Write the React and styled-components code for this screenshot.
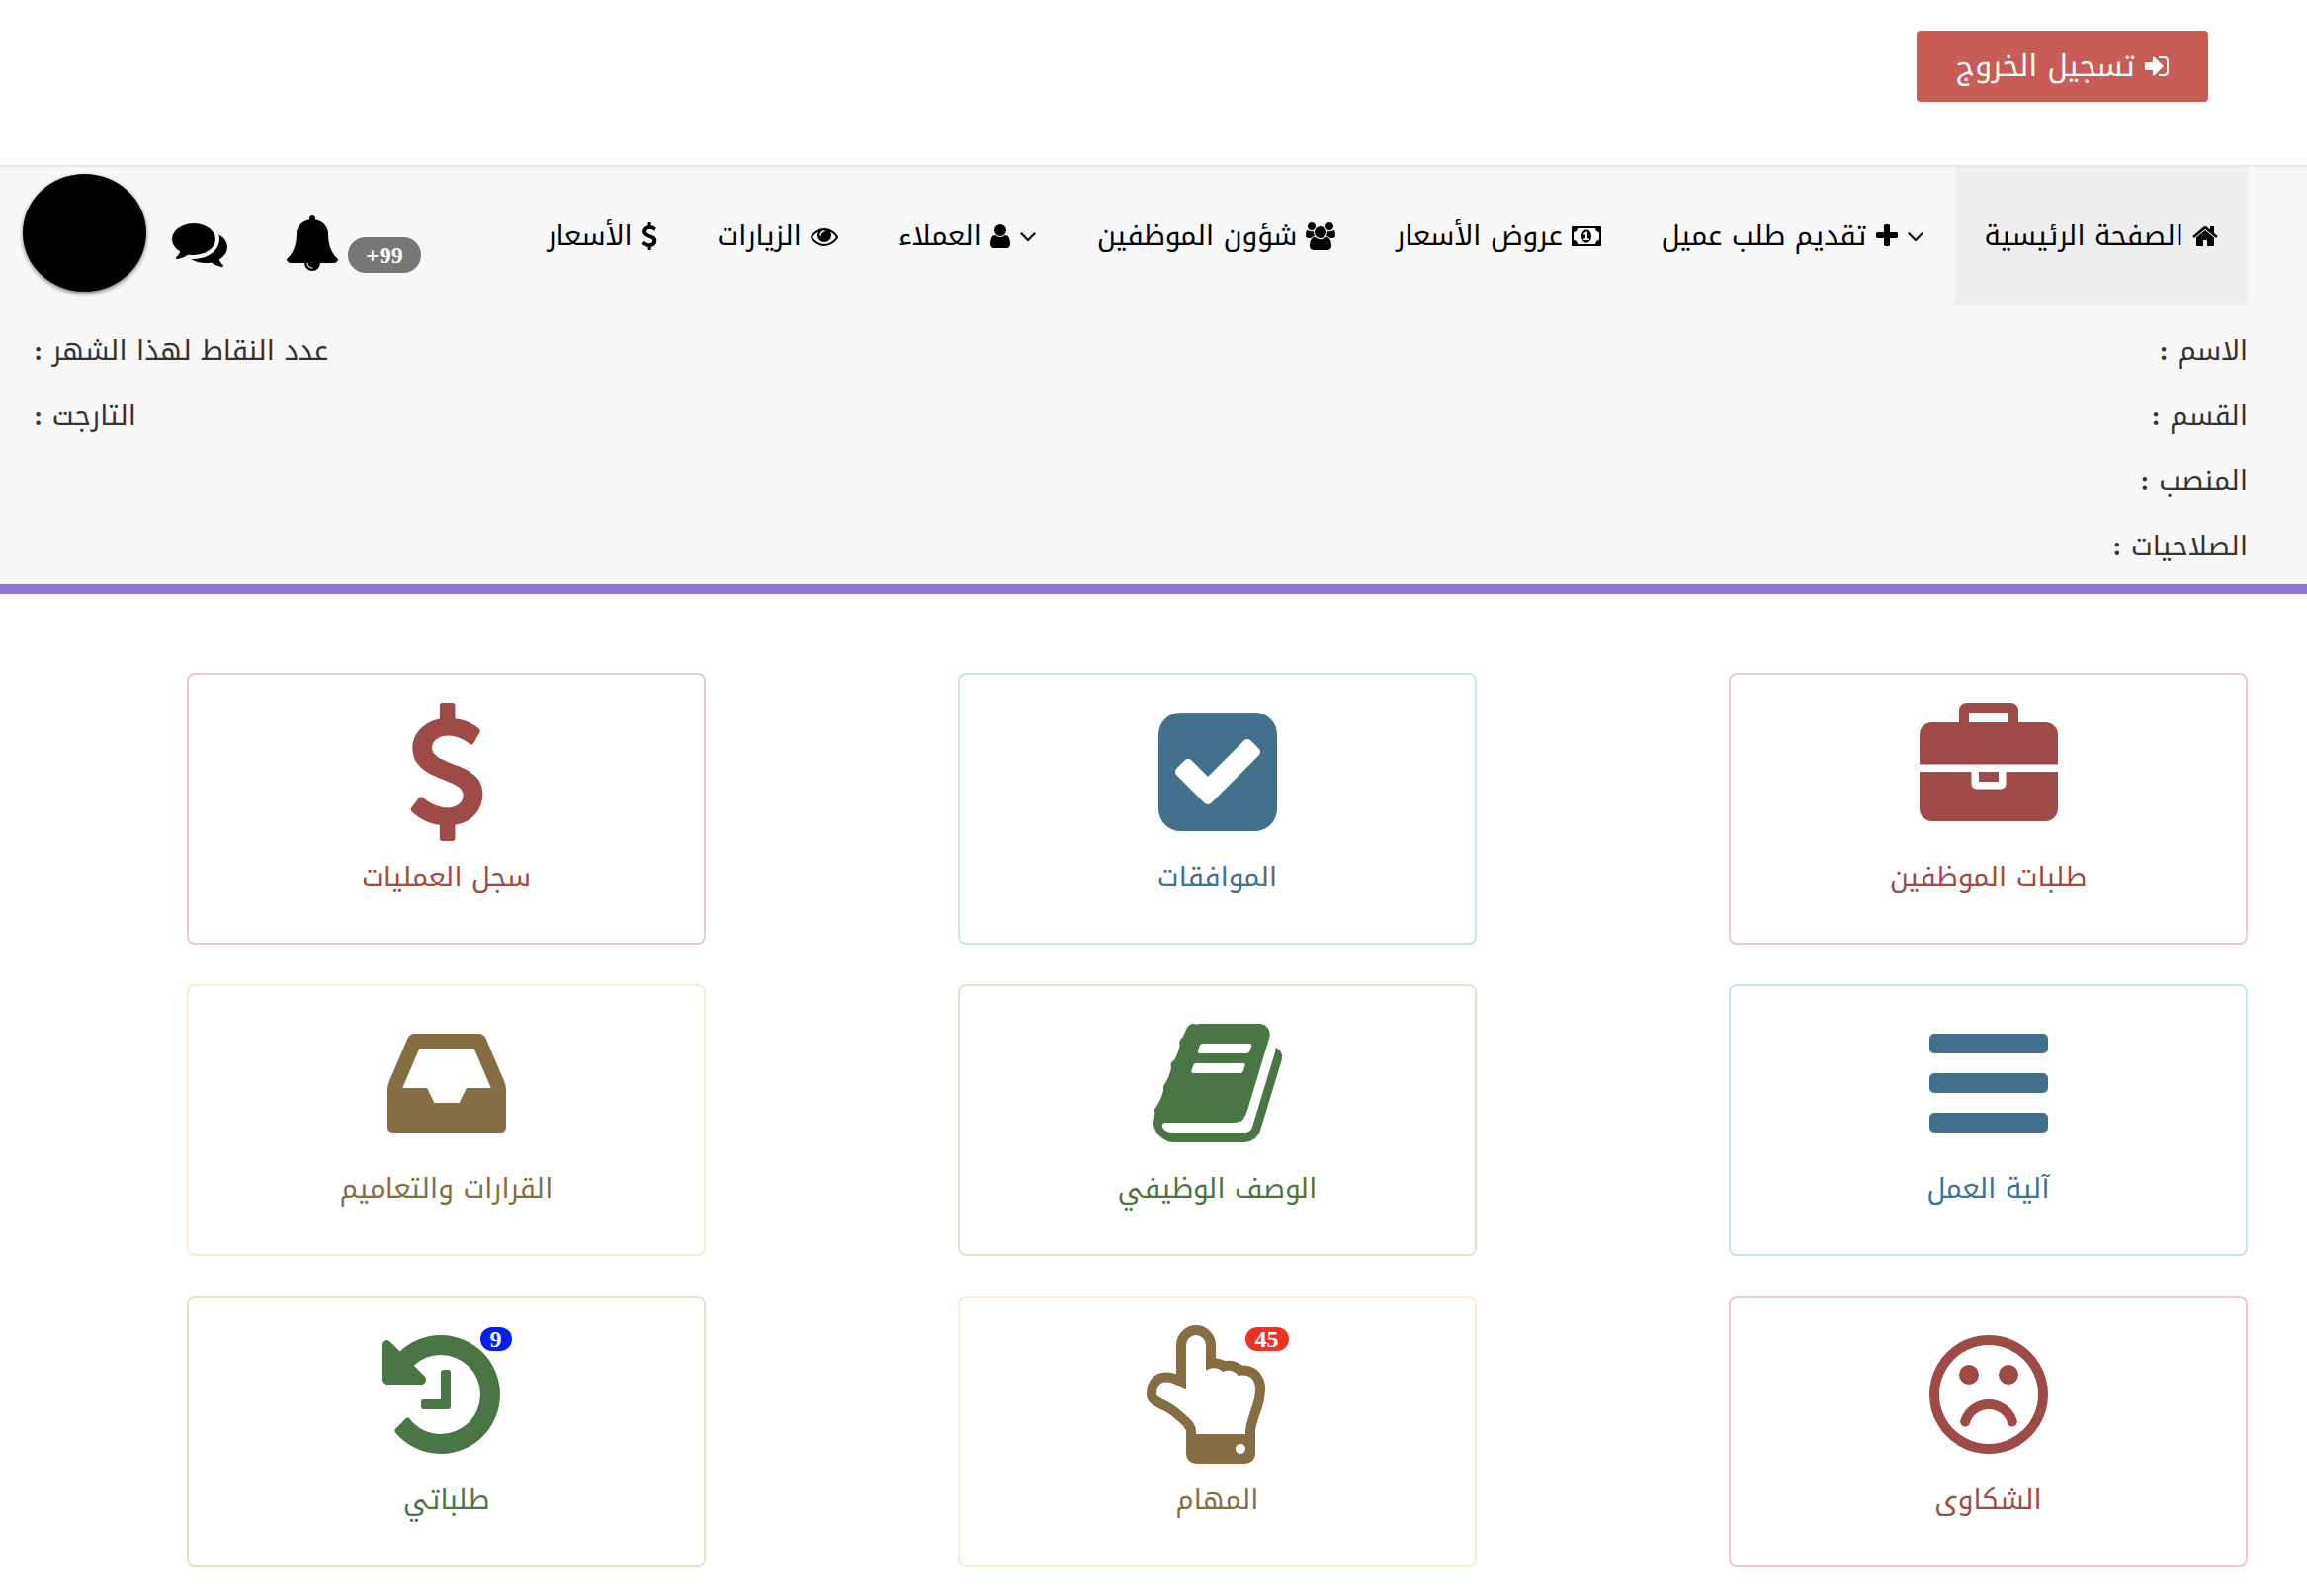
import React from "react";
import styled, { createGlobalStyle } from "styled-components";

const GlobalStyle = createGlobalStyle`
  * {
    box-sizing: border-box;
  }

  body {
    margin: 0;
    background: #fff;
    color: #333;
    font-family: "Noto Kufi Arabic", "Noto Sans Arabic", "DejaVu Sans", sans-serif;
    font-size: 28px;
    line-height: 40px;
  }
`

// x and w are the left edge and the advance width of the glyph in its 1792 unit box
const icons = {
  signIn: { x: 128, w: 1536, d: "M1312 896q0 26-19 45l-544 544q-19 19-45 19t-45-19-19-45v-288h-448q-26 0-45-19t-19-45v-384q0-26 19-45t45-19h448v-288q0-26 19-45t45-19 45 19l544 544q19 19 19 45zm352-352v704q0 119-84.5 203.5t-203.5 84.5h-320q-13 0-22.5-9.5t-9.5-22.5q0-4-1-20t-.5-26.5 3-23.5 10-19.5 20.5-6.5h320q66 0 113-47t47-113v-704q0-66-47-113t-113-47h-312l-11.5-1-11.5-3-8-5.5-7-9-2-13.5q0-4-1-20t-.5-26.5 3-23.5 10-19.5 20.5-6.5h320q119 0 203.5 84.5t84.5 203.5z" },
  home: { x: 64, w: 1664, d: "M1472 992v480q0 26-19 45t-45 19h-384v-384h-256v384h-384q-26 0-45-19t-19-45v-480q0-1 .5-3t.5-3l575-474 575 474q1 2 1 6zm223-69l-62 74q-8 9-21 11h-3q-13 0-21-7l-692-577-692 577q-12 8-24 7-13-2-21-11l-62-74q-8-10-7-23.5t11-21.5l719-599q32-26 76-26t76 26l244 204v-195q0-14 9-23t23-9h192q14 0 23 9t9 23v408l219 182q10 8 11 21.5t-7 23.5z" },
  angleDown: { x: 320, w: 1152, d: "M1395 736q0 13-10 23l-466 466q-10 10-23 10t-23-10l-466-466q-10-10-10-23t10-23l50-50q10-10 23-10t23 10l393 393 393-393q10-10 23-10t23 10l50 50q10 10 10 23z" },
  plus: { x: 192, w: 1408, d: "M1600 736v192q0 40-28 68t-68 28h-416v416q0 40-28 68t-68 28h-192q-40 0-68-28t-28-68v-416h-416q-40 0-68-28t-28-68v-192q0-40 28-68t68-28h416v-416q0-40 28-68t68-28h192q40 0 68 28t28 68v416h416q40 0 68 28t28 68z" },
  money: { x: 0, w: 1920, d: "M768 1152h384v-96h-128v-448h-114l-148 137 77 80q42-37 55-57h2v288h-128v96zm512-256q0 70-21 142t-59.5 134-101.5 101-138 39-138-39-101.5-101-59.5-134-21-142 21-142 59.5-134 101.5-101 138-39 138 39 101.5 101 59.5 134 21 142zm512 256v-512q-106 0-181-75t-75-181h-1152q0 106-75 181t-181 75v512q106 0 181 75t75 181h1152q0-106 75-181t181-75zm128-832v1152q0 26-19 45t-45 19h-1792q-26 0-45-19t-19-45v-1152q0-26 19-45t45-19h1792q26 0 45 19t19 45z" },
  users: { x: -64, w: 1920, d: "M529 896q-162 5-265 128h-134q-82 0-138-40.5t-56-118.5q0-353 124-353 6 0 43.5 21t97.5 42.5 119 21.5q67 0 133-23-5 37-5 66 0 139 81 256zm1071 637q0 120-73 189.5t-194 69.5h-874q-121 0-194-69.5t-73-189.5q0-53 3.5-103.5t14-109 26.5-108.5 43-97.5 62-81 85.5-53.5 111.5-20q10 0 43 21.5t73 48 107 48 135 21.5 135-21.5 107-48 73-48 43-21.5q61 0 111.5 20t85.5 53.5 62 81 43 97.5 26.5 108.5 14 109 3.5 103.5zm-1024-1277q0 106-75 181t-181 75-181-75-75-181 75-181 181-75 181 75 75 181zm704 384q0 159-112.5 271.5t-271.5 112.5-271.5-112.5-112.5-271.5 112.5-271.5 271.5-112.5 271.5 112.5 112.5 271.5zm576 225q0 78-56 118.5t-138 40.5h-134q-103-123-265-128 81-117 81-256 0-29-5-66 66 23 133 23 59 0 119-21.5t97.5-42.5 43.5-21q124 0 124 353zm-128-609q0 106-75 181t-181 75-181-75-75-181 75-181 181-75 181 75 75 181z" },
  user: { x: 256, w: 1280, d: "M1536 1399q0 109-62.5 187t-150.5 78h-854q-88 0-150.5-78t-62.5-187q0-85 8.5-160.5t31.5-152 58.5-131 94-89 134.5-34.5q131 128 313 128t313-128q76 0 134.5 34.5t94 89 58.5 131 31.5 152 8.5 160.5zm-256-887q0 159-112.5 271.5t-271.5 112.5-271.5-112.5-112.5-271.5 112.5-271.5 271.5-112.5 271.5 112.5 112.5 271.5z" },
  eye: { x: 0, w: 1792, d: "M1664 960q-152-236-381-353 61 104 61 225 0 185-131.5 316.5t-316.5 131.5-316.5-131.5-131.5-316.5q0-121 61-225-229 117-381 353 133 205 333.5 326.5t434.5 121.5 434.5-121.5 333.5-326.5zm-720-384q0-20-14-34t-34-14q-125 0-214.5 89.5t-89.5 214.5q0 20 14 34t34 14 34-14 14-34q0-86 61-147t147-61q20 0 34-14t14-34zm848 384q0 34-20 69-140 230-376.5 368.5t-499.5 138.5-499.5-139-376.5-368q-20-35-20-69t20-69q140-229 376.5-368t499.5-139 499.5 139 376.5 368q20 35 20 69z" },
  dollar: { x: 384, w: 1024, d: "M1362 1185q0 153-99.5 263.5t-258.5 136.5v175q0 14-9 23t-23 9h-135q-13 0-22.5-9.5t-9.5-22.5v-175q-66-9-127.5-31t-101.5-44.5-74-48-46.5-37.5-17.5-18q-17-21-2-41l103-135q7-10 23-12 15-2 24 9l2 2q113 99 243 125 37 8 74 8 81 0 142.5-43t61.5-122q0-28-15-53t-33.5-42-58.5-37.5-66-32-80-32.5q-39-16-61.5-25t-61.5-26.5-62.5-31-56.5-35.5-53.5-42.5-43.5-49-35.5-58-21-66.5-8.5-78q0-138 98-242t255-134v-180q0-13 9.5-22.5t22.5-9.5h135q14 0 23 9t9 23v176q57 6 110.5 23t87 33.5 63.5 37.5 39 29 15 14q17 18 5 38l-81 146q-8 15-23 16-14 3-27-7-3-3-14.5-12t-39-26.5-58.5-32-74.5-26-85.5-11.5q-95 0-155 43t-60 111q0 26 8.5 48t29.5 41.5 39.5 33 56 31 60.5 27 70 27.5q53 20 81 31.5t76 35 75.5 42.5 62 50 53 63.5 31.5 76.5 13 94z" },
  bell: { x: 64, w: 1664, d: "M912 1696q0-16-16-16-59 0-101.5-42.5t-42.5-101.5q0-16-16-16t-16 16q0 73 51.5 124.5t124.5 51.5q16 0 16-16zm816-288q0 52-38 90t-90 38h-448q0 106-75 181t-181 75-181-75-75-181h-448q-52 0-90-38t-38-90q50-42 91-88t85-119.5 74.5-158.5 50-206 19.5-260q0-152 117-282.5t307-158.5q-8-19-8-39 0-40 28-68t68-28 68 28 28 68q0 20-8 39 190 28 307 158.5t117 282.5q0 139 19.5 260t50 206 74.5 158.5 85 119.5 91 88z" },
  comments: { x: 0, w: 1792, d: "M1408 768q0 139-94 257t-256.5 186.5-353.5 68.5q-86 0-176-16-124 88-278 128-36 9-86 16h-3q-11 0-20.5-8t-11.5-21q-1-3-1-6.5t.5-6.5 2-6l2.5-5 3.5-5.5 4-5 4.5-5 4-4.5q5-6 23-25t26-29.5 22.5-29 25-38.5 20.5-44q-124-72-195-177t-71-224q0-139 94-257t256.5-186.5 353.5-68.5 353.5 68.5 256.5 186.5 94 257zm384 256q0 120-71 224.5t-195 176.5q10 24 20.5 44t25 38.5 22.5 29 26 29.5 23 25q1 1 4 4.5t4.5 5 4 5 3.5 5.5l2.5 5 2 6 .5 6.5-1 6.5q-3 14-13 22t-22 7q-50-7-86-16-154-40-278-128-90 16-176 16-271 0-472-132 58 4 88 4 161 0 309-45t264-129q125-92 192-212t67-254q0-77-23-152 129 71 204 178t75 230z" },
  briefcase: { x: 0, w: 1792, d: "M640 256h512v-128h-512v128zm1152 640v480q0 66-47 113t-113 47h-1472q-66 0-113-47t-47-113v-480h672v160q0 26 19 45t45 19h320q26 0 45-19t19-45v-160h672zm-768 0v128h-256v-128h256zm768-480v384h-1792v-384q0-66 47-113t113-47h352v-160q0-40 28-68t68-28h576q40 0 68 28t28 68v160h352q66 0 113 47t47 113z" },
  checkSquare: { x: 128, w: 1536, d: "M813 1299l614-614q19-19 19-45t-19-45l-102-102q-19-19-45-19t-45 19l-467 467-211-211q-19-19-45-19t-45 19l-102 102q-19 19-19 45t19 45l358 358q19 19 45 19t45-19zm851-883v960q0 119-84.5 203.5t-203.5 84.5h-960q-119 0-203.5-84.5t-84.5-203.5v-960q0-119 84.5-203.5t203.5-84.5h960q119 0 203.5 84.5t84.5 203.5z" },
  bars: { x: 128, w: 1536, d: "M1664 1344v128q0 26-19 45t-45 19h-1408q-26 0-45-19t-19-45v-128q0-26 19-45t45-19h1408q26 0 45 19t19 45zm0-512v128q0 26-19 45t-45 19h-1408q-26 0-45-19t-19-45v-128q0-26 19-45t45-19h1408q26 0 45 19t19 45zm0-512v128q0 26-19 45t-45 19h-1408q-26 0-45-19t-19-45v-128q0-26 19-45t45-19h1408q26 0 45 19t19 45z" },
  book: { x: 64, w: 1664, d: "M1703 478q40 57 18 129l-275 906q-19 64-76.5 107.5t-122.5 43.5h-923q-77 0-148.5-53.5t-99.5-131.5q-24-67-2-127 0-4 3-27t4-37q1-8-3-21.5t-3-19.5q2-11 8-21t16.5-23.5 16.5-23.5q23-38 45-91.5t30-91.5q3-10 .5-30t-.5-28q3-11 17-28t17-23q21-36 42-92t25-90q1-9-2.5-32t.5-28q4-13 22-30.5t22-22.5q19-26 42.5-84.5t27.5-96.5q1-8-3-25.5t-2-26.5q2-8 9-18t18-23 17-21q8-12 16.5-30.5t15-35 16-36 19.5-32 26.5-23.5 36-11.5 47.5 5.5l-1 3q38-9 51-9h761q74 0 114 56t18 130l-274 906q-36 119-71.5 153.5t-128.5 34.5h-869q-27 0-38 15-11 16-1 43 24 70 144 70h923q29 0 56-15.5t35-41.5l300-987q7-22 5-57 38 15 59 43zm-1064 2q-4 13 2 22.5t20 9.5h608q13 0 25.5-9.5t16.5-22.5l21-64q4-13-2-22.5t-20-9.5h-608q-13 0-25.5 9.5t-16.5 22.5zm-83 256q-4 13 2 22.5t20 9.5h608q13 0 25.5-9.5t16.5-22.5l21-64q4-13-2-22.5t-20-9.5h-608q-13 0-25.5 9.5t-16.5 22.5z" },
  inbox: { x: 128, w: 1536, d: "M1151 960h316q-1-3-2.5-8t-2.5-8l-212-496h-708l-212 496q-1 2-2.5 8t-2.5 8h316l95 192h320zm513 30v482q0 26-19 45t-45 19h-1408q-26 0-45-19t-19-45v-482q0-62 25-123l238-552q10-25 36.5-42t52.5-17h832q26 0 52.5 17t36.5 42l238 552q25 61 25 123z" },
  frown: { x: 128, w: 1536, d: "M1262 1229q8 25-4 48.5t-37 31.5-49-4-32-38q-25-80-92.5-129.5t-151.5-49.5-151.5 49.5-92.5 129.5q-8 26-31.5 38t-48.5 4q-26-8-38-31.5t-4-48.5q37-121 138-195t228-74 228 74 138 195zm-494-589q0 53-37.5 90.5t-90.5 37.5-90.5-37.5-37.5-90.5 37.5-90.5 90.5-37.5 90.5 37.5 37.5 90.5zm512 0q0 53-37.5 90.5t-90.5 37.5-90.5-37.5-37.5-90.5 37.5-90.5 90.5-37.5 90.5 37.5 37.5 90.5zm256 256q0-130-51-248.5t-136.5-204-204-136.5-248.5-51-248.5 51-204 136.5-136.5 204-51 248.5 51 248.5 136.5 204 204 136.5 248.5 51 248.5-51 204-136.5 136.5-204 51-248.5zm128 0q0 209-103 385.5t-279.5 279.5-385.5 103-385.5-103-279.5-279.5-103-385.5 103-385.5 279.5-279.5 385.5-103 385.5 103 279.5 279.5 103 385.5z" },
  handUp: { x: 128, w: 1536, d: "M1408 1600q0-26-19-45t-45-19-45 19-19 45 19 45 45 19 45-19 19-45zm128-764q0-189-167-189-26 0-56 5-16-30-52.5-47.5t-73.5-17.5-69 18q-50-53-119-53-25 0-55.5 10t-47.5 25v-331q0-52-38-90t-90-38q-51 0-89.5 39t-38.5 89v576q-20 0-48.5-15t-55-33-68-33-84.5-15q-67 0-97.5 44.5t-30.5 115.5q0 24 139 90 44 24 65 37 64 40 145 112 81 71 106 101 57 69 57 140v32h640v-32q0-72 32-167t64-193.5 32-179.5zm128-5q0 133-69 322-59 164-59 223v288q0 53-37.5 90.5t-90.5 37.5h-640q-53 0-90.5-37.5t-37.5-90.5v-288q0-10-4.5-21.5t-14-23.5-18-22.5-22.5-24-21.5-20.5-21.5-19-17-14q-74-65-129-100-21-13-62-33t-72-37-63-40.5-49.5-55-17.5-69.5q0-125 67-206.5t189-81.5q68 0 128 22v-374q0-104 77-180t179-76q105 0 181 75.5t76 180.5v169q62 4 119 37 21-3 43-3 101 0 178 60 139-1 219.5 85t80.5 227z" },
  history: { x: 128, w: 1536, d: "M1664 896q0 156-61 298t-164 245-245 164-298 61q-172 0-327-72.5t-264-204.5q-7-10-6.5-22.5t8.5-20.5l137-138q10-9 25-9 16 2 23 12 73 95 179 147t225 52q104 0 198.5-40.5t163.5-109.5 109.5-163.5 40.5-198.5-40.5-198.5-109.5-163.5-163.5-109.5-198.5-40.5q-98 0-188 35.5t-160 101.5l137 138q31 30 14 69-17 40-59 40h-448q-26 0-45-19t-19-45v-448q0-42 40-59 39-17 69 14l130 129q107-101 244.5-156.5t284.5-55.5q156 0 298 61t245 164 164 245 61 298zm-640-288v448q0 14-9 23t-23 9h-320q-14 0-23-9t-9-23v-64q0-14 9-23t23-9h224v-352q0-14 9-23t23-9h64q14 0 23 9t9 23z" },
};

const Svg = styled.svg`
  flex: none;
  display: block;
  fill: currentColor;
`

const Icon = ({ name, size = 28 }) => {
  const { x, w, d } = icons[name];

  return (
    <Svg
      viewBox={`${x} 0 ${w} 1792`}
      width={(w * size) / 1792}
      height={size}
      aria-hidden="true"
    >
      <path d={d} />
    </Svg>
  );
}

const Header = styled.header`
  display: flex;
  padding: 31px 100px 64px;
`

const LogoutButton = styled.button`
  display: flex;
  align-items: center;
  gap: 10px;
  height: 72px;
  padding: 0 40px;
  border: 0;
  border-radius: 4px;
  background: #c95c54;
  color: #fff;
  font: inherit;
  font-size: 30px;
  cursor: pointer;
`

const NavBar = styled.div`
  border-top: 2px solid #e7e7e7;
  border-bottom: 10px solid #8c75df;
  background: #f7f7f7;
`

const NavRow = styled.div`
  display: flex;
  justify-content: space-between;
  padding: 0 60px 0 23px;
`

const Menu = styled.nav`
  display: flex;
  gap: 1px;
`

const MenuLink = styled.a`
  display: flex;
  align-items: center;
  gap: 9px;
  height: 140px;
  padding: 0 30px;
  background: ${(props) => (props.$active ? "#eee" : "transparent")};
  color: #000;
  text-decoration: none;
  white-space: nowrap;
`

const Tools = styled.div`
  display: flex;
  color: #000;
`

const ToolLink = styled.a`
  display: flex;
  gap: 10px;
  margin-left: ${(props) => props.$gap}px;
  padding-top: 49px;
  color: inherit;
  text-decoration: none;
`

const NavBadge = styled.span`
  height: 36px;
  margin-top: 22px;
  padding: 0 18px;
  border-radius: 20px;
  background: #777;
  color: #fff;
  font: bold 24px/36px "Liberation Serif", serif;
`

const Avatar = styled.div`
  width: 125px;
  height: 119px;
  margin-top: 7px;
  border-radius: 50%;
  background: #000;
  box-shadow: 0 2px 4px rgba(0, 0, 0, 0.5);
`

const Details = styled.div`
  display: flex;
  justify-content: space-between;
  padding: 13px 60px 5px 34px;
`

const DetailLine = styled.p`
  margin: 0;
  line-height: 66px;
  text-align: ${(props) => props.$align};
`

const Colon = styled.b`
  font-family: "Liberation Serif", serif;
  line-height: 1;
`

const Grid = styled.main`
  display: grid;
  grid-template-columns: repeat(3, 1fr);
  gap: 40px 255px;
  padding: 80px 60px 20px 189px;
`

const tones = {
  red: { text: "#9e4a46", border: "#e7cbd1" },
  blue: { text: "#42708d", border: "#c1e7f0" },
  green: { text: "#4a7544", border: "#dae7ca" },
  yellow: { text: "#856f42", border: "#f8ebce" },
};

const Card = styled.a`
  display: flex;
  flex-direction: column;
  align-items: center;
  height: 275px;
  padding-top: 28px;
  border: 2px solid ${(props) => tones[props.$tone].border};
  border-radius: 8px;
  color: ${(props) => tones[props.$tone].text};
  text-decoration: none;
`

const CardIcon = styled.div`
  display: flex;
  direction: ltr;
`

const CardBadge = styled.span`
  height: 24px;
  margin: 2px 0 0 -20px;
  padding: 0 10px;
  border-radius: 12px;
  background: ${(props) => props.$color};
  color: #fff;
  font: bold 24px/24px "Liberation Serif", serif;
`

const CardTitle = styled.div`
  margin-top: 17px;
`

const menu = [
  { icon: "home", label: "الصفحة الرئيسية", active: true },
  { icon: "plus", label: "تقديم طلب عميل", dropdown: true },
  { icon: "money", label: "عروض الأسعار" },
  { icon: "users", label: "شؤون الموظفين" },
  { icon: "user", label: "العملاء", dropdown: true },
  { icon: "eye", label: "الزيارات" },
  { icon: "dollar", label: "الأسعار" },
];

const cards = [
  { icon: "briefcase", label: "طلبات الموظفين", tone: "red" },
  { icon: "checkSquare", label: "الموافقات", tone: "blue" },
  { icon: "dollar", label: "سجل العمليات", tone: "red" },
  { icon: "bars", label: "آلية العمل", tone: "blue" },
  { icon: "book", label: "الوصف الوظيفي", tone: "green" },
  { icon: "inbox", label: "القرارات والتعاميم", tone: "yellow" },
  { icon: "frown", label: "الشكاوى", tone: "red" },
  { icon: "handUp", label: "المهام", tone: "yellow", count: 45, countColor: "#eb3323" },
  { icon: "history", label: "طلباتي", tone: "green", count: 9, countColor: "#001ef5" },
];

const Detail = ({ label, align }) => (
  <DetailLine $align={align}>
    {label} <Colon>:</Colon>
  </DetailLine>
);

const App = () => {
  return (
    <div dir="rtl" lang="ar">
      <GlobalStyle />
      <Header>
        <LogoutButton type="button">
          <Icon name="signIn" />
          تسجيل الخروج
        </LogoutButton>
      </Header>
      <NavBar>
        <NavRow>
          <Menu>
            {menu.map((item) => (
              <MenuLink href="#" key={item.label} $active={item.active}>
                {item.dropdown && <Icon name="angleDown" />}
                <Icon name={item.icon} />
                {item.label}
              </MenuLink>
            ))}
          </Menu>
          <Tools>
            <ToolLink href="#" $gap={60} aria-label="الإشعارات">
              <NavBadge>99+</NavBadge>
              <Icon name="bell" size={56} />
            </ToolLink>
            <ToolLink href="#" $gap={26} aria-label="الرسائل">
              <Icon name="comments" size={56} />
            </ToolLink>
            <Avatar />
          </Tools>
        </NavRow>
        <Details>
          <div>
            <Detail label="الاسم" />
            <Detail label="القسم" />
            <Detail label="المنصب" />
            <Detail label="الصلاحيات" />
          </div>
          <div>
            <Detail label="عدد النقاط لهذا الشهر" align="left" />
            <Detail label="التارجت" align="left" />
          </div>
        </Details>
      </NavBar>
      <Grid>
        {cards.map((card) => (
          <Card href="#" key={card.label} $tone={card.tone}>
            <CardIcon>
              <Icon name={card.icon} size={140} />
              {card.count && <CardBadge $color={card.countColor}>{card.count}</CardBadge>}
            </CardIcon>
            <CardTitle>{card.label}</CardTitle>
          </Card>
        ))}
      </Grid>
    </div>
  );
}

export default App;
